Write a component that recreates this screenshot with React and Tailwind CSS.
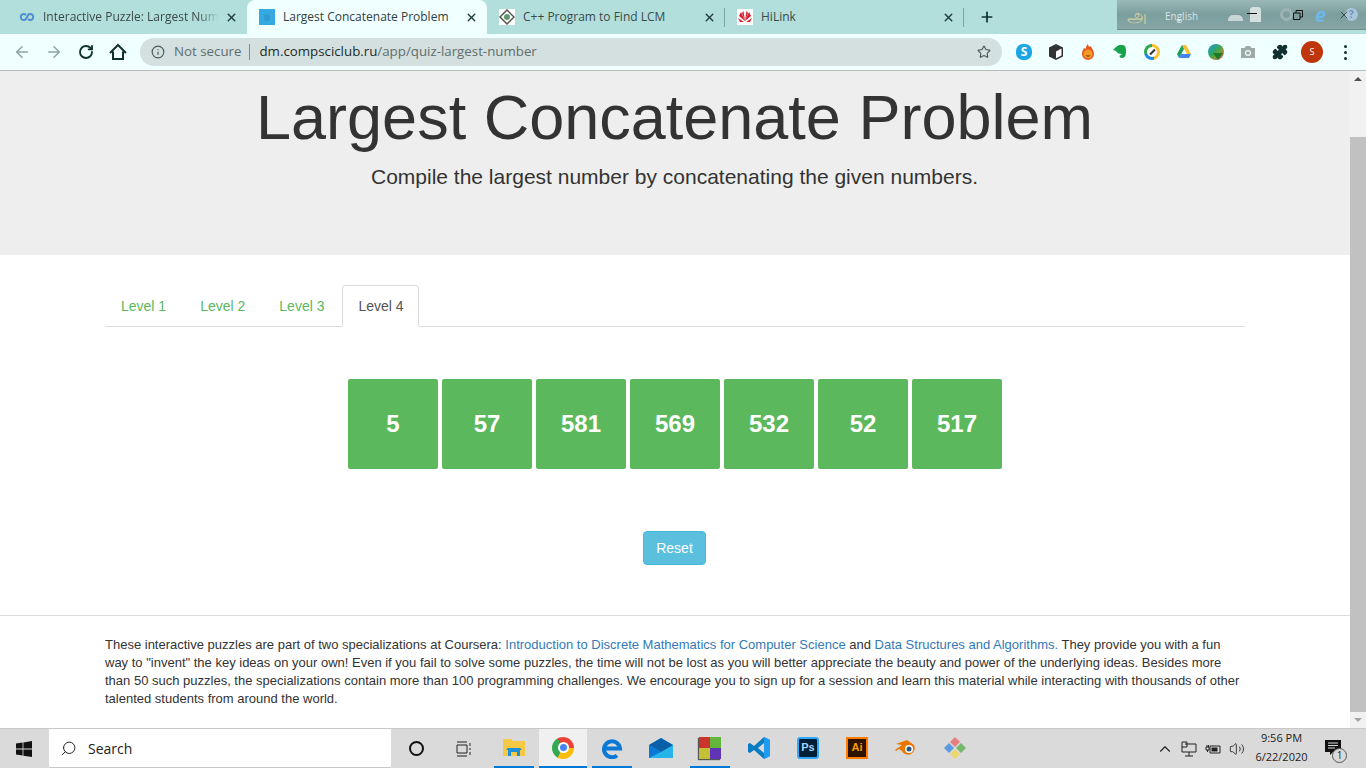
import React from 'react';
import { ArrowLeft, ArrowRight, RotateCw, Info, Star, X, Plus, Search, Puzzle, ChevronUp, Volume2 } from 'lucide-react';

const Tab = ({ active, icon, title, width, fade, sep }) => (
  <div className={`relative flex items-center h-[34px] shrink-0 pl-[12px] pr-[9px] ${active ? 'bg-[#f0ffff] rounded-t-[8px]' : ''}`} style={{ width }}>
    <div className="w-[16px] h-[16px] shrink-0 flex items-center justify-center">{icon}</div>
    <span className={`ml-[8px] flex-1 overflow-hidden whitespace-nowrap text-[12px] ${active ? 'text-[#30403f]' : 'text-[#3a4a49]'} ${fade ? '[mask-image:linear-gradient(to_right,#000_88%,transparent)]' : ''}`}>{title}</span>
    <X className="w-[13px] h-[13px] shrink-0 ml-[6px] text-[#1f3a3a]" strokeWidth={2.6} />
    {sep && <div className="absolute right-0 top-[8px] w-px h-[19px] bg-[#7fa3a0]"></div>}
  </div>
);

const Tile = ({ n }) => (
  <div className="w-[90px] h-[90px] bg-[#5cb85c] rounded-[2px] flex items-center justify-center text-white font-bold text-[24px]">{n}</div>
);

const TabStrip = () => (
  <div className="h-[34px] bg-[#b2dfdb] flex items-center pl-[7px] relative">
    <Tab fade width={240} title="Interactive Puzzle: Largest Number" icon={
      <svg viewBox="0 0 16 16" className="w-[16px] h-[16px]"><path d="M7 6a3 3 0 1 0 0 4M9 6a3 3 0 1 1 0 4M7 10l2-4" fill="none" stroke="#4f8fd0" strokeWidth="2" /></svg>
    } />
    <Tab active width={240} title="Largest Concatenate Problem" icon={
      <div className="w-[16px] h-[16px] bg-[#35a9e1] flex items-center justify-center"><div className="w-[6px] h-[7px] rounded-full bg-[#2f9bd0]"></div></div>
    } />
    <Tab width={238} sep title="C++ Program to Find LCM" icon={
      <svg viewBox="0 0 16 16" className="w-[16px] h-[16px]"><rect width="16" height="16" fill="#fff" /><path d="M8 1l7 7-7 7-7-7z" fill="none" stroke="#555" strokeWidth="1.5" /><circle cx="8" cy="8" r="3" fill="#5c9a6b" /></svg>
    } />
    <Tab width={239} sep title="HiLink" icon={
      <svg viewBox="0 0 16 16" className="w-[16px] h-[16px]"><rect width="16" height="16" fill="#fff" /><path d="M8 12L4 3 2 7zM8 12L6.500 2 5 4zM8 12L9.500 2 11 4zM8 12l4-9 2 4zM7 13L1 9l2 4zM9 13l6-4-2 4z" fill="#d81e2c" /></svg>
    } />
    <Plus className="w-[16px] h-[16px] ml-[15px] text-[#0f3233]" strokeWidth={2.6} />
    <div className="absolute right-0 top-0 w-[249px] h-[30px] bg-gradient-to-b from-[#9ab8b8] via-[#7d9e9e] to-[#86a6a6] border-b border-[#6d8c8c] flex items-center text-[#d6e4e4]">
      <span className="ml-[10px] w-[16px] text-center text-[18px] leading-none text-[#cfcf9f]">அ</span>
      <div className="relative ml-[22px] w-[31px] -mt-[2px] leading-none">
        <span className="text-[10px] whitespace-nowrap">English</span>
        <div className="absolute left-[11px] top-[13px] w-0 h-0 border-x-[3px] border-x-transparent border-t-[3px] border-t-[#d6e4e4]"></div>
      </div>
      <div className="ml-[32px] w-[15px] h-[6px] mt-[6px] rounded-t-[5px] bg-[#c9d6d6]"></div>
      <div className="relative ml-[4px] w-[22px] h-[15px]">
        <div className="absolute left-[3px] top-0 w-[11px] h-[15px] rounded-t-[3px] bg-[#d4dfdf]"></div>
        <div className="absolute left-0 top-[6px] w-[10px] h-px bg-[#111]"></div>
      </div>
      <div className="ml-[11px] w-[13px] h-[13px] rounded-full border-[3px] border-[#9db4b4]"></div>
      <svg viewBox="0 0 10 10" className="w-[10px] h-[10px] text-[#111]"><path d="M.5 3h6.500v6.500H.5zM3 3V.5h6.500V7H7" fill="none" stroke="currentColor" /></svg>
      <span className="ml-[10px] w-[15px] text-center text-[20px] italic font-bold text-[#6db8e8] leading-none">e</span>
      <div className="relative ml-[10px] w-[20px] h-[13px]">
        <div className="absolute left-[7px] top-0 w-[13px] h-[13px] rounded-full bg-[#a9c6dd] text-[#6d93b5] text-[10px] font-bold flex items-center justify-center">?</div>
        <X className="absolute left-0 top-[1px] w-[12px] h-[12px] text-[#111]" strokeWidth={1.2} />
      </div>
    </div>
  </div>
);

const Toolbar = () => (
  <div className="h-[37px] bg-[#f0ffff] border-b border-[#b4bcbc] flex items-center">
    <ArrowLeft className="w-[18px] h-[18px] ml-[13px] text-[#8fa3a2]" strokeWidth={2} />
    <ArrowRight className="w-[18px] h-[18px] ml-[14px] text-[#8fa3a2]" strokeWidth={2} />
    <RotateCw className="w-[16px] h-[16px] ml-[15px] text-[#10302f]" strokeWidth={2.8} />
    <svg viewBox="0 0 18 18" className="w-[18px] h-[18px] ml-[15px]" fill="none" stroke="#10302f" strokeWidth="2"><path d="M1 10l8-8 8 8M4 8.500V16h10V8.500" /></svg>
    <div className="ml-[13px] w-[862px] h-[28px] rounded-full bg-[#d4e0df] flex items-center">
      <Info className="w-[14px] h-[14px] ml-[11px] text-[#4d5a59]" />
      <span className="ml-[9px] text-[13.3px] text-[#5f6d6c]">Not secure</span>
      <div className="ml-[8px] w-px h-[16px] bg-[#7f8e8d]"></div>
      <span className="ml-[9px] text-[13.3px] text-[#5f6d6c]"><span className="text-[#1d2b2a]">dm.compsciclub.ru</span>/app/quiz-largest-number</span>
      <Star className="w-[14px] h-[14px] ml-auto mr-[11px] text-[#4d5a59]" strokeWidth={2} />
    </div>
    <div className="ml-[14px] w-[16px] h-[16px] rounded-[7px] bg-[#1ca6e4] text-white text-[12px] font-bold flex items-center justify-center">S</div>
    <svg viewBox="0 0 16 16" className="w-[16px] h-[16px] ml-[16px]"><path d="M8 0l7 3.500v9L8 16l-7-3.500v-9z" fill="#333" /><path d="M8 7.500L13.500 4.500v7L8 14.200z" fill="#fff" /></svg>
    <svg viewBox="0 0 16 16" className="w-[16px] h-[16px] ml-[16px]"><path d="M8 0c0 3 2 3 3 2 0 2 3 4 3 8a6 6 0 0 1-12 0c0-3 1-4 2-6 1 1 2 1 2 0 0-2 1-3 2-4z" fill="#e8541f" /><circle cx="8" cy="10" r="4.500" fill="#f59a23" /><path d="M5.500 11.500c1 1.500 4 1.500 5 0z" fill="#6b2a0a" /></svg>
    <svg viewBox="0 0 16 16" className="w-[16px] h-[16px] ml-[16px]"><path d="M4 3l3-2h4c3 1 3 4 3 7s-1 6-4 6-3-3-1-3l1-1c-3 0-5-1-6-3L1 6z" fill="#16a34a" /></svg>
    <div className="ml-[16px] w-[16px] h-[16px] rounded-full bg-[conic-gradient(#fbc02d_0_45%,#1e88e5_45%_70%,#2fa84f_70%)] flex items-center justify-center">
      <div className="w-[10px] h-[10px] rounded-full bg-white flex items-center justify-center"><div className="w-[7px] h-[2px] bg-[#333] -rotate-45"></div></div>
    </div>
    <svg viewBox="0 0 16 16" className="w-[16px] h-[16px] ml-[16px]"><path d="M6 1h4l5 9h-4z" fill="#fbc02d" /><path d="M6 1l-5 9 2 4 5-9z" fill="#1e9e5a" /><path d="M3 14h10l2-4H5z" fill="#4285f4" /></svg>
    <div className="relative ml-[16px] w-[16px] h-[16px] rounded-full bg-gradient-to-br from-[#2f8ed8] via-[#3aa845] to-[#d9483b]">
      <div className="absolute left-[5px] top-[9px] w-0 h-0 border-x-[5px] border-x-transparent border-t-[7px] border-t-[#1c7a2b]"></div>
    </div>
    <svg viewBox="0 0 16 16" className="w-[16px] h-[16px] ml-[16px]"><path d="M1 4h3.500L6 2h4l1.500 2H15v10H1z" fill="#a0a8a8" /><circle cx="8" cy="9" r="3" fill="#f0ffff" /><circle cx="8" cy="9" r="1.800" fill="#a0a8a8" /></svg>
    <Puzzle className="w-[16px] h-[16px] ml-[16px] text-[#10302f]" fill="#10302f" />
    <div className="ml-[13px] w-[22px] h-[22px] rounded-full bg-[#bf360c] text-white text-[9px] flex items-center justify-center">S</div>
    <div className="ml-[21px] flex flex-col gap-[3px]">
      <div className="w-[3px] h-[3px] rounded-full bg-[#10302f]"></div>
      <div className="w-[3px] h-[3px] rounded-full bg-[#10302f]"></div>
      <div className="w-[3px] h-[3px] rounded-full bg-[#10302f]"></div>
    </div>
  </div>
);

const Level = ({ label }) => (
  <div className="h-[42px] px-[15px] mr-[2px] border border-transparent flex items-center text-[#5cb85c]">{label}</div>
);

const Page = () => (
  <div className="flex-1 min-w-0 bg-white font-['Liberation_Sans',sans-serif] text-[#333]">
    <div className="h-[184px] bg-[#eeeeee] pr-[1px] flex flex-col items-center">
      <h1 className="text-[63px] leading-[69px] mt-[12px]">Largest Concatenate Problem</h1>
      <p className="text-[21px] leading-[30px] mt-[10px]">Compile the largest number by concatenating the given numbers.</p>
    </div>
    <div className="mx-[105px] mt-[30px] h-[42px] border-b border-[#dddddd] flex text-[14px]">
      <Level label="Level 1" />
      <Level label="Level 2" />
      <Level label="Level 3" />
      <div className="h-[42px] pl-[15px] pr-[14px] flex items-center text-[#555555] bg-white border border-[#dddddd] border-b-white rounded-t-[4px]">Level 4</div>
    </div>
    <div className="mt-[52px] flex justify-center gap-[4px]">
      {[5, 57, 581, 569, 532, 52, 517].map((n) => <Tile key={n} n={n} />)}
    </div>
    <div className="mt-[62px] pr-[1px] flex justify-center">
      <button className="h-[34px] w-[63px] bg-[#5bc0de] border border-[#46b8da] rounded-[4px] text-white text-[14px]">Reset</button>
    </div>
    <div className="mt-[50px] border-t border-[#dddddd] pt-[20px] px-[105px] text-[13px] leading-[18px] text-[#333]">
      These interactive puzzles are part of two specializations at Coursera: <span className="text-[#337ab7]">Introduction to Discrete Mathematics for Computer Science</span> and <span className="text-[#337ab7]">Data Structures and Algorithms.</span> They provide you with a fun way to "invent" the key ideas on your own! Even if you fail to solve some puzzles, the time will not be lost as you will better appreciate the beauty and power of the underlying ideas. Besides more than 50 such puzzles, the specializations contain more than 100 programming challenges. We encourage you to sign up for a session and learn this material while interacting with thousands of other talented students from around the world.
    </div>
  </div>
);

const Scrollbar = () => (
  <div className="w-[16px] bg-[#f1f1f1] flex flex-col items-center">
    <div className="mt-[6px] w-0 h-0 border-x-[4px] border-x-transparent border-b-[4px] border-b-[#505050]"></div>
    <div className="mt-[56px] w-[16px] flex-1 bg-[#c1c1c1]"></div>
    <div className="mt-[6px] mb-[6px] w-0 h-0 border-x-[4px] border-x-transparent border-t-[4px] border-t-[#a3a3a3]"></div>
  </div>
);

const TaskIcon = ({ active, running, children }) => (
  <div className={`w-[48px] h-[39px] flex flex-col items-center ${active ? 'bg-[#f0f0f0]' : ''}`}>
    <div className="flex-1 flex items-center justify-center">{children}</div>
    <div className={`h-[2px] ${active ? 'w-[48px]' : 'w-[40px]'} ${running ? 'bg-[#0078d7]' : ''}`}></div>
  </div>
);

const Taskbar = () => (
  <div className="h-[40px] bg-[#dadada] border-t border-[#c8c8c8] flex items-center font-['Open_Sans',sans-serif] text-[#222]">
    <div className="w-[49px] pr-[1px] flex justify-center">
      <svg viewBox="0 0 16 16" className="w-[16px] h-[16px]"><path d="M0 2.500l6.600-1v6H0zM7.400 1.400L16 0v7.500H7.400zM0 8.400h6.600v6l-6.600-1zM7.400 8.400H16V16l-8.600-1.300z" fill="#111" /></svg>
    </div>
    <div className="w-[342px] h-[39px] bg-white flex items-center border-b border-[#c8c8c8]">
      <Search className="w-[17px] h-[17px] ml-[11px] -scale-x-100 text-[#222]" strokeWidth={1.4} />
      <span className="ml-[11px] text-[14px]">Search</span>
    </div>
    <div className="w-[48px] ml-[1px] flex justify-center"><div className="w-[15px] h-[15px] rounded-full border-[2px] border-[#111]"></div></div>
    <div className="w-[48px] flex justify-center">
      <svg viewBox="0 0 16 16" className="w-[16px] h-[16px]" fill="none" stroke="#222"><path d="M1 1h10M1 15h10M1 4h10v8H1zM14 2v3M14 7v2M14 11v3" /></svg>
    </div>
    <div className="flex ml-[2px] gap-[1px]">
      <TaskIcon running>
        <svg viewBox="0 0 22 20" className="w-[22px] h-[20px]"><path d="M0 1h8l2 2h12v15H0z" fill="#f6c945" /><path d="M5 10h12l2 2h-2v6h-3v-4H8v4H5v-6H3z" fill="#1d8fd6" /></svg>
      </TaskIcon>
      <TaskIcon active running>
        <div className="w-[22px] h-[22px] rounded-full bg-[conic-gradient(from_-30deg,#ea4335_0_120deg,#fbbc05_120deg_240deg,#34a853_240deg)] flex items-center justify-center">
          <div className="w-[11px] h-[11px] rounded-full bg-[#4285f4] border-[2px] border-white"></div>
        </div>
      </TaskIcon>
      <TaskIcon running>
        <svg viewBox="0 0 22 22" className="w-[22px] h-[22px]" fill="none" stroke="#0a78d6" strokeWidth="4"><path d="M3 11.500h16a8 8 0 1 0-3 7" /></svg>
      </TaskIcon>
      <TaskIcon>
        <svg viewBox="0 0 24 20" className="w-[24px] h-[20px]"><path d="M0 7L12 0l12 7v13H0z" fill="#25b5ea" /><path d="M0 7l12 7 12-7-12-7z" fill="#0a5fa8" /><path d="M0 20V7l12 7z" fill="#0a78d6" /></svg>
      </TaskIcon>
      <TaskIcon running>
        <div className="grid grid-cols-2 w-[22px] h-[22px] shadow-[-1px_1px_1px_#555]">
          <div className="bg-[#c9352b]"></div><div className="bg-[#63b53c]"></div><div className="bg-[#c4c035]"></div><div className="bg-[#5f35b5]"></div>
        </div>
      </TaskIcon>
      <TaskIcon>
        <svg viewBox="0 0 24 24" className="w-[24px] h-[24px]"><path d="M17 1l6 3v16l-6 3L7 14l-4 3-2-1V8l2-1 4 3z" fill="#0a7cc4" /><path d="M17 1l6 3v16l-6 3z" fill="#1f9cf0" /><path d="M17 7v10l-6-5z" fill="#dadada" /></svg>
      </TaskIcon>
      <TaskIcon>
        <div className="w-[22px] h-[22px] bg-[#001e36] border-[2px] border-[#31a8ff] rounded-[3px] text-[#9fd6ff] text-[11px] font-bold flex items-center justify-center font-['Liberation_Sans',sans-serif]">Ps</div>
      </TaskIcon>
      <TaskIcon>
        <div className="w-[22px] h-[22px] bg-[#2e1300] border-[2px] border-[#ff7c00] text-[#ff9a00] text-[11px] font-bold flex items-center justify-center font-['Liberation_Sans',sans-serif]">Ai</div>
      </TaskIcon>
      <TaskIcon>
        <svg viewBox="0 0 24 18" className="w-[24px] h-[18px]"><path d="M1 11l7-5-6-1 11-4 7 5a6.500 6.500 0 1 1-12 6l-3-2-3 2z" fill="#ea7600" /><circle cx="15" cy="10" r="4" fill="#fff" /><circle cx="15" cy="10" r="2.500" fill="#265787" /></svg>
      </TaskIcon>
      <TaskIcon>
        <svg viewBox="0 0 24 24" className="w-[24px] h-[24px]"><path d="M12 1l5 5-5 5-5-5z" fill="#e77f7f" /><path d="M6 7l5 5-5 5-5-5z" fill="#5b9be0" /><path d="M18 7l5 5-5 5-5-5z" fill="#74b86c" /><path d="M12 13l5 5-5 5-5-5z" fill="#ecd76f" /></svg>
      </TaskIcon>
    </div>
    <div className="ml-auto flex items-center">
      <ChevronUp className="w-[18px] h-[18px] text-[#222]" strokeWidth={1.5} />
      <svg viewBox="0 0 16 16" className="w-[16px] h-[16px] ml-[7px]" fill="none" stroke="#222"><path d="M4 3h11v8H1V1h5v5H1M8 11v4M4 15h8" /></svg>
      <svg viewBox="0 0 16 16" className="w-[16px] h-[16px] ml-[8px]" fill="none" stroke="#222"><path d="M5 5h10v7H5zM1 6v3h3V6zM2 4v2M3.500 4v2M2.500 9v2" /><rect x="7" y="7" width="5" height="3" fill="#222" /></svg>
      <Volume2 className="w-[16px] h-[16px] ml-[8px] text-[#222]" strokeWidth={1.3} />
      <div className="w-[73px] -mt-[3px] text-center text-[11px] leading-[19px]">
        <div>9:56 PM</div>
        <div>6/22/2020</div>
      </div>
      <div className="relative w-[26px] h-[18px] ml-[7px] mr-[15px]">
        <svg viewBox="0 0 16 16" className="w-[16px] h-[16px]"><path d="M0 0h16v12H8l-3 3v-3H0z" fill="#111" /><path d="M3 3h10M3 5.500h10M3 8h7" stroke="#dadada" /></svg>
        <div className="absolute left-[7px] top-[8px] w-[15px] h-[15px] rounded-full bg-[#dadada] border border-[#555] text-[10px] flex items-center justify-center">1</div>
      </div>
    </div>
  </div>
);

export default function App() {
  return (
    <div className="w-[1366px] h-[768px] overflow-hidden flex flex-col font-['Open_Sans',sans-serif]">
      <TabStrip />
      <Toolbar />
      <div className="flex-1 min-h-0 flex">
        <Page />
        <Scrollbar />
      </div>
      <Taskbar />
    </div>
  );
}
